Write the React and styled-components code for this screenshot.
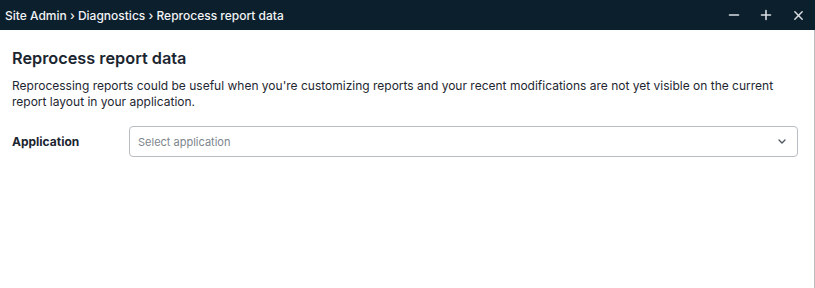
import React from 'react'
import styled, { createGlobalStyle } from 'styled-components'

const Global = createGlobalStyle`
  html, body { margin: 0; padding: 0; background: #fff; }
  body { font-family: Inter, "Noto Sans", sans-serif; color: #1b2530; }
  * { box-sizing: border-box; }
`

const Window = styled.div`
  width: 815px;
  height: 288px;
  display: flex;
  flex-direction: column;
`

const TitleBar = styled.div`
  height: 30px;
  background: #0c1f2c;
  color: #f2f4f6;
  display: flex;
  align-items: center;
  padding: 0 5px 0 5px;
  font-size: 12px;
  font-weight: 500;
`

const Crumbs = styled.div`
  flex: 1;
  white-space: nowrap;
`

const Controls = styled.div`
  display: flex;
  align-items: center;
  gap: 12px;
  margin-right: 2px;
`

const Ctl = styled.button`
  width: 20px;
  height: 20px;
  padding: 0;
  border: 0;
  background: none;
  color: #d8dde2;
  display: flex;
  align-items: center;
  justify-content: center;
`

const Body = styled.div`
  flex: 1;
  border-right: 1px solid #b9bdc2;
  padding: 17px 12px 0 12px;
`

const Heading = styled.h1`
  margin: 0 0 9px 0;
  font-size: 16.3px;
  font-weight: 600;
  line-height: 22px;
  color: #1b2530;
`

const Text = styled.p`
  margin: 0;
  font-size: 12px;
  line-height: 16px;
  color: #1e2731;
  width: 790px;
`

const Row = styled.div`
  display: flex;
  align-items: center;
  margin-top: 16px;
`

const Label = styled.label`
  width: 117px;
  font-size: 12px;
  font-weight: 700;
  color: #1b2530;
`

const Select = styled.div`
  width: 669px;
  height: 31px;
  border: 1px solid #b8bdc3;
  border-radius: 4px;
  display: flex;
  align-items: center;
  padding: 0 11px 0 8px;
  font-size: 11px;
  color: #7d858e;
`

const Placeholder = styled.span`
  flex: 1;
`

const Icon = ({ d, size = 12 }) => (
  <svg width={size} height={size} viewBox="0 0 12 12" fill="none" stroke="currentColor" strokeWidth="1.6" strokeLinecap="round">
    <path d={d} />
  </svg>
)

export default function App() {
  return (
    <Window>
      <Global />
      <TitleBar>
        <Crumbs>Site Admin › Diagnostics › Reprocess report data</Crumbs>
        <Controls>
          <Ctl aria-label="minimize"><Icon d="M1.5 6h9" /></Ctl>
          <Ctl aria-label="maximize"><Icon d="M1.5 6h9M6 1.5v9" /></Ctl>
          <Ctl aria-label="close"><Icon d="M2 2l8 8M10 2l-8 8" size={11} /></Ctl>
        </Controls>
      </TitleBar>
      <Body>
        <Heading>Reprocess report data</Heading>
        <Text>
          Reprocessing reports could be useful when you're customizing reports and your recent modifications are not yet visible on the current report layout in your application.
        </Text>
        <Row>
          <Label>Application</Label>
          <Select>
            <Placeholder>Select application</Placeholder>
            <svg width="8" height="5" viewBox="0 0 8 5" fill="none" stroke="#4a535c" strokeWidth="1.3" strokeLinecap="round" strokeLinejoin="round">
              <path d="M1 1l3 3 3-3" />
            </svg>
          </Select>
        </Row>
      </Body>
    </Window>
  )
}
